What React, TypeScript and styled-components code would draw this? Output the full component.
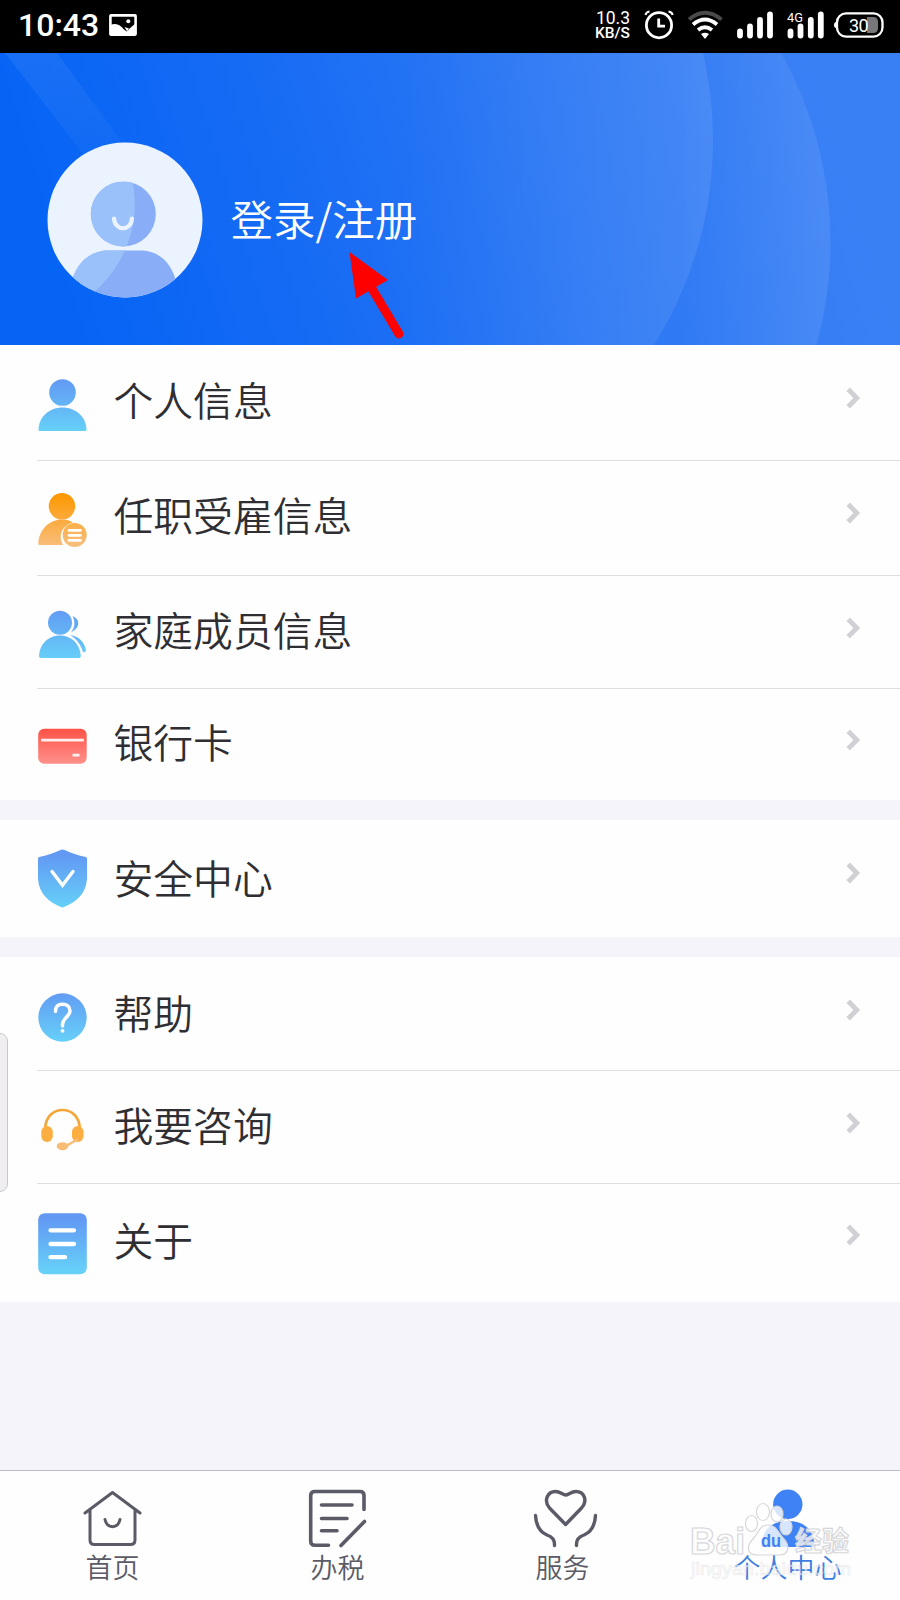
import React from 'react';
import styled, { createGlobalStyle } from 'styled-components';

const GlobalStyle = createGlobalStyle`
  * { box-sizing: border-box; }
  body { margin: 0; background: #f4f4fa; }
`;

const Screen = styled.main`
  position: relative;
  display: flex;
  flex-direction: column;
  width: 900px;
  height: 1600px;
  overflow: hidden;
  background: #f4f4fa;
  font-family: 'Noto Sans CJK SC', sans-serif;
`;

const StatusBar = styled.header`
  display: flex;
  align-items: center;
  height: 53px;
  flex: none;
  padding: 0 4px 3px 18px;
  background: #000;
  color: #fff;
  font-family: Roboto, sans-serif;
`;

const Clock = styled.span`
  width: 91px;
  font-size: 32px;
  font-weight: 500;
  line-height: 50px;
`;

const StatusIcons = styled.div`
  display: flex;
  align-items: center;
  margin-left: auto;
`;

const NetSpeed = styled.div`
  display: flex;
  flex-direction: column;
  align-items: flex-end;
  margin-right: 14px;
  padding-top: 1px;
  font-weight: 500;
  line-height: 15px;
  white-space: nowrap;
`;

const SpeedValue = styled.span`
  font-size: 17.5px;
  font-weight: 400;
`;

const SpeedUnit = styled.span`
  font-size: 15.5px;
`;

const Hero = styled.section`
  position: relative;
  display: flex;
  align-items: center;
  height: 292px;
  flex: none;
  padding: 41px 0 0 47px;
`;

const HeroBackdrop = styled.svg`
  position: absolute;
  inset: 0;
`;

const Avatar = styled.svg`
  position: relative;
  flex: none;
`;

const LoginLink = styled.span`
  position: relative;
  margin-left: 27.5px;
  padding-bottom: 4px;
  color: #fff;
  font-size: 42.5px;
  font-weight: 350;
  line-height: 60px;
  white-space: nowrap;
`;

const Pointer = styled.svg`
  position: absolute;
  left: 340px;
  top: 192px;
`;

const Group = styled.section`
  flex: none;
  margin-bottom: 20px;
  background: #fefefe;
`;

const Row = styled.div<{ $height: number }>`
  display: flex;
  align-items: center;
  height: ${(p) => p.$height}px;
  padding-left: 37px;
`;

const Divider = styled.div`
  height: 1px;
  margin-left: 37px;
  background: #dfdfe2;
`;

const RowIcon = styled.svg`
  flex: none;
`;

const RowLabel = styled.span<{ $lift: number }>`
  flex: 1;
  margin-left: 24.5px;
  padding-bottom: ${(p) => p.$lift * 2}px;
  color: #2f2f33;
  font-size: 39.8px;
  font-weight: 350;
  line-height: 56px;
`;

const Chevron = styled.svg<{ $lift: number }>`
  flex: none;
  margin: 0 39px ${(p) => p.$lift * 2}px 0;
`;

const TabBar = styled.nav`
  display: flex;
  height: 130px;
  margin-top: auto;
  flex: none;
  border-top: 1px solid #bdbdc6;
  background: #fefefe;
`;

const Tab = styled.div<{ $active?: boolean }>`
  display: flex;
  flex: 1;
  flex-direction: column;
  align-items: center;
  padding-top: 13px;
  color: ${(p) => (p.$active ? '#3d7fe0' : '#5a5b66')};
  font-size: 27px;
  font-weight: 350;
  line-height: 34px;
`;

const SideHandle = styled.div`
  position: absolute;
  left: -2px;
  top: 1033px;
  width: 10px;
  height: 159px;
  border: 1px solid #c9c8cb;
  border-radius: 0 8px 8px 0;
  background: #f0eef1;
`;

const Watermark = styled.svg`
  position: absolute;
  left: 680px;
  top: 1495px;
`;

const blue = 'url(#blue)';

/* Row icons share a 52x76 canvas that is centred on the row. */
const PersonIcon = () => (
  <g fill={blue}>
    <circle cx="25.5" cy="27.5" r="13.3" />
    <path d="M1.5 64.5C2 51 13 42.5 25.5 42.5S49 51 49.5 64.5Q49.5 66 48 66H3Q1.5 66 1.5 64.5Z" />
  </g>
);

const EmployIcon = () => (
  <g>
    <g fill="url(#orange)">
      <circle cx="25" cy="26.3" r="13.3" />
      <path d="M1.3 63.5C2 49 13 39.5 25 39.5C30 39.5 33 40.5 36 42.5C24 46 21 56 26 65H3Q1.3 65 1.3 63.5Z" />
      <circle cx="37.7" cy="55" r="12" />
    </g>
    <path d="M32 50.3H43.500M32 55.3H43.500M32 60.3H43.500" stroke="#fff" strokeWidth="2.8" strokeLinecap="round" />
  </g>
);

const FamilyIcon = () => (
  <g fill={blue}>
    <circle cx="23" cy="28.7" r="12" />
    <path d="M35.5 22C43.5 25 43.5 34 34 38.5C38 33 38.5 28 35.5 22Z" />
    <path d="M2 62C2.5 49.5 12 41.5 23 41.5S43 49.5 43.8 62Q43.8 64 42 64H4Q2 64 2 62Z" />
    <path d="M33 41C42 42 48 49 49 56.5Q48 59 46 58C43.5 50 39 44.5 33 41Z" />
  </g>
);

const CardIcon = () => (
  <g>
    <rect x="1.2" y="21.8" width="48.5" height="35" rx="6" fill="url(#red)" />
    <path d="M4 33.2H46.8M35.5 48.2H42.5" stroke="#fff" strokeWidth="2.8" opacity=".9" />
  </g>
);

const ShieldIcon = () => (
  <g>
    <path d="M24 8.8Q25.5 8 27 8.8C34 12 41 14.5 49 16Q50 16.5 50 18V38C49 53 39 61 27 66Q25.5 66.8 24 66C12 61 2 53 1 38V18Q1 16.5 2 16C10 14.5 17 12 24 8.8Z" fill={blue} />
    <path d="M15 30.5L25.5 44.3L36 30.5" fill="none" stroke="#fff" strokeWidth="3.4" strokeLinecap="round" />
  </g>
);

const HelpIcon = () => (
  <g>
    <circle cx="25.5" cy="41.5" r="24.2" fill={blue} />
    <path d="M18.5 35.5C18.5 30.5 21.5 28.3 25.5 28.3C30 28.3 33 31 33 35C33 40.5 25.5 42 25.5 49V50" fill="none" stroke="#fff" strokeWidth="3.5" strokeLinecap="round" />
    <circle cx="25.5" cy="54.8" r="1.9" fill="#fff" />
  </g>
);

const HeadsetIcon = () => (
  <g>
    <path d="M8.3 39C9 15 42 15 42.7 39" fill="none" stroke="#f5a638" strokeWidth="2.7" />
    <rect x="4.3" y="37" width="11.5" height="16" rx="5.7" fill="#fcae41" />
    <rect x="35" y="37" width="11.5" height="16" rx="5.7" fill="#fcae41" />
    <path d="M41 50L30 56.5" stroke="#f8bd75" strokeWidth="2.5" />
    <ellipse cx="25.5" cy="57.2" rx="5.7" ry="4" fill="#f8bd75" />
  </g>
);

const AboutIcon = () => (
  <g>
    <rect x="1.2" y="8.2" width="48.6" height="61" rx="6.5" fill={blue} />
    <path d="M13.5 25.3H37M13.5 39H37M13.5 52.2H28" stroke="#fff" strokeWidth="4.3" strokeLinecap="round" />
  </g>
);

type Item = { label: string; icon: React.ReactNode; height: number; lift?: number; chevronLift?: number };

const groups: Item[][] = [
  [
    { label: '个人信息', icon: <PersonIcon />, height: 115 },
    { label: '任职受雇信息', icon: <EmployIcon />, height: 114, lift: 4.5, chevronLift: 5.5 },
    { label: '家庭成员信息', icon: <FamilyIcon />, height: 112 },
    { label: '银行卡', icon: <CardIcon />, height: 111 },
  ],
  [{ label: '安全中心', icon: <ShieldIcon />, height: 117, lift: 1.5, chevronLift: 5.5 }],
  [
    { label: '帮助', icon: <HelpIcon />, height: 113, lift: 2, chevronLift: 3.5 },
    { label: '我要咨询', icon: <HeadsetIcon />, height: 112 },
    { label: '关于', icon: <AboutIcon />, height: 118, lift: 4, chevronLift: 8 },
  ],
];

const Gradient = ({ id, from, to }: { id: string; from: string; to: string }) => (
  <linearGradient id={id} gradientUnits="userSpaceOnUse" x1="0" y1="14" x2="0" y2="66">
    <stop stopColor={from} />
    <stop offset="1" stopColor={to} />
  </linearGradient>
);

export default function App() {
  return (
    <Screen>
      <GlobalStyle />
      <svg width="0" height="0" style={{ position: 'absolute' }}>
        <defs>
          <Gradient id="blue" from="#6299f3" to="#66d0f8" />
          <Gradient id="orange" from="#fd9800" to="#f8be7c" />
          <linearGradient id="red" x1="0" y1="0" x2="0" y2="1">
            <stop stopColor="#ff5247" />
            <stop offset="1" stopColor="#fd918b" />
          </linearGradient>
        </defs>
      </svg>

      <StatusBar>
        <Clock>10:43</Clock>
        <svg width="28" height="22" viewBox="0 0 28 22">
          <rect x="1.4" y="1.4" width="25.2" height="19.2" rx="0.5" fill="none" stroke="#fff" strokeWidth="2.6" />
          <path d="M1 11C8 8.5 11 11 15 15.5L18.5 18L15.5 13L20 14.5L18.5 16.5L21 18.5L19.5 19V21H1Z" fill="#fff" />
          <path d="M20 15L27 9V21H20L18 18Z" fill="#fff" />
          <circle cx="19.3" cy="7.2" r="2" fill="#fff" />
        </svg>
        <StatusIcons>
          <NetSpeed>
            <SpeedValue>10.3</SpeedValue>
            <SpeedUnit>KB/S</SpeedUnit>
          </NetSpeed>
          <svg width="252" height="34" viewBox="644 8 252 34" fill="none">
            <g stroke="#fff">
              <circle cx="659" cy="25.2" r="12.6" strokeWidth="2.8" />
              <path d="M658.7 18.5V26.2H665" strokeWidth="2.8" />
              <path d="M645.5 15Q646 12 649.5 11.5M668.5 11.5Q672 12 672.7 15" strokeWidth="2" />
            </g>
            <path d="M689 19.5Q705 6 721.5 19.5" stroke="#4a4a4a" strokeWidth="4" />
            <path d="M693 24.5Q705 14.5 717 24.5M698 30Q705 24.5 712 30" stroke="#fff" strokeWidth="3.8" />
            <path d="M701 34Q705 31.5 709 34L705 39Z" fill="#fff" />
            <path d="M740 31.5V35.5M750 26.5V35.5M760 20V35.5M770 14.5V35.5M790.5 31.5V35.5M800.5 26.5V35.5M810.8 20V35.5M820.8 14.5V35.5" stroke="#fff" strokeWidth="5.8" strokeLinecap="round" />
            <text x="787" y="21.5" fill="#fff" fontSize="13.5" fontFamily="Roboto" fontWeight="400" textLength="16" lengthAdjust="spacingAndGlyphs">4G</text>
            <path d="M867 17H873Q878 17 878 22V28Q878 33 873 33H867Z" fill="#77777b" />
            <rect x="837" y="13.4" width="45.5" height="23.2" rx="9" stroke="#fff" strokeWidth="2.3" />
            <path d="M837 21.5Q834 22 834 25T837 28.5Z" fill="#fff" />
            <text x="849" y="31.6" fill="#fff" fontSize="18" fontFamily="Roboto" fontWeight="400" textLength="19.5">30</text>
          </svg>
        </StatusIcons>
      </StatusBar>

      <Hero>
        <HeroBackdrop width="900" height="292" viewBox="0 53 900 292">
          <defs>
            <linearGradient id="sky" gradientUnits="userSpaceOnUse" x1="70" y1="310" x2="820" y2="80">
              <stop stopColor="#0664f5" />
              <stop offset=".3" stopColor="#166bf4" />
              <stop offset=".65" stopColor="#2c78f4" />
              <stop offset="1" stopColor="#3a80f5" />
            </linearGradient>
            <linearGradient id="glowA" gradientUnits="userSpaceOnUse" x1="400" y1="0" x2="713" y2="0">
              <stop stopColor="#fff" stopOpacity="0" />
              <stop offset="1" stopColor="#fff" stopOpacity=".09" />
            </linearGradient>
            <linearGradient id="glowB" gradientUnits="userSpaceOnUse" x1="680" y1="0" x2="830" y2="0">
              <stop stopColor="#fff" stopOpacity="0" />
              <stop offset="1" stopColor="#fff" stopOpacity=".09" />
            </linearGradient>
            <linearGradient id="ray" gradientUnits="userSpaceOnUse" x1="30" y1="53" x2="110" y2="170">
              <stop stopColor="#fff" stopOpacity=".07" />
              <stop offset="1" stopColor="#fff" stopOpacity=".02" />
            </linearGradient>
          </defs>
          <rect y="53" width="900" height="292" fill="url(#sky)" />
          <circle cx="445.5" cy="242" r="385" fill="url(#glowB)" />
          <circle cx="328" cy="140" r="385" fill="url(#glowA)" />
          <path d="M5 53H57L135 160H88Z" fill="url(#ray)" />
        </HeroBackdrop>
        <Avatar width="156" height="156" viewBox="47 141.5 156 156">
          <clipPath id="disc"><circle cx="125" cy="219.5" r="77.5" /></clipPath>
          <clipPath id="figure">
            <circle cx="123.3" cy="213.5" r="32.5" />
            <path d="M71 285C75 262 91 250 108 250H141C158 250 173 262 177 285V310H71Z" />
          </clipPath>
          <circle cx="125" cy="219.5" r="77.5" fill="#eaf3fe" />
          <g clipPath="url(#disc)">
            <g clipPath="url(#figure)">
              <rect x="47" y="141" width="156" height="160" fill="#89aef7" />
              <path d="M47 141H118C144 190 142 246 96 290L80 310H47Z" fill="#9bc1fb" />
            </g>
          </g>
          <path d="M114 218C115 231 131 231 132 218" fill="none" stroke="#eaf3fe" strokeWidth="4.2" strokeLinecap="round" />
        </Avatar>
        <LoginLink>登录/注册</LoginLink>
        <Pointer width="70" height="100" viewBox="340 245 70 100">
          <path d="M349.5 252L388 280L356 298.5Z" fill="#f00" />
          <path d="M371 287L399 334" stroke="#f00" strokeWidth="9" strokeLinecap="round" />
        </Pointer>
      </Hero>

      {groups.map((items, g) => (
        <Group key={g}>
          {items.map((item, i) => (
            <React.Fragment key={item.label}>
              {i > 0 && <Divider />}
              <Row $height={item.height}>
                <RowIcon width="52" height="76" viewBox="0 0 52 76">{item.icon}</RowIcon>
                <RowLabel $lift={item.lift ?? 3.5}>{item.label}</RowLabel>
                <Chevron $lift={item.chevronLift ?? 4.5} width="16" height="24" viewBox="0 0 16 24">
                  <path d="M3.2 3.2L11.8 12L3.2 20.8" fill="none" stroke="#d0d0d5" strokeWidth="4.8" />
                </Chevron>
              </Row>
            </React.Fragment>
          ))}
        </Group>
      ))}

      <TabBar>
        <Tab>
          <svg width="66" height="66" viewBox="80 1484 66 66" fill="none" stroke="#5a5b66" strokeWidth="3" strokeLinecap="round" strokeLinejoin="round">
            <path d="M85 1513L112.5 1492.5L140 1513M90 1510V1540Q90 1544.5 94.5 1544.5H130.5Q135 1544.5 135 1540V1510M105 1519.5C107 1529 118 1529 120 1519.5" />
          </svg>
          首页
        </Tab>
        <Tab>
          <svg width="66" height="66" viewBox="305 1484 66 66" fill="none" stroke="#5a5b66" strokeWidth="3.6" strokeLinecap="round" strokeLinejoin="round">
            <path d="M364 1509.5V1495.5Q364 1491.5 360 1491.5H315Q310.7 1491.5 310.7 1495.5V1541Q310.7 1545.3 315 1545.3H328.5M321.5 1505H352M321.5 1518.5H347M321.5 1530.7H337M341 1545.5L364.5 1521.5" />
          </svg>
          办税
        </Tab>
        <Tab>
          <svg width="72" height="66" viewBox="527 1484 72 66" fill="none" stroke="#5a5b66" strokeWidth="3.4" strokeLinecap="round" strokeLinejoin="round">
            <path d="M565.6 1524.5L549.5 1508C543 1500 548 1491.5 555.5 1491.5C560 1491.5 563 1495 565.6 1495S571 1491.5 576 1491.5C583.5 1491.5 588.5 1500 581.5 1508L565.6 1524.5ZM535.5 1515.5C536 1525 540 1532 547 1535Q555 1537.500 554.5 1545.5M595.5 1515.5C595 1525 591 1532 584 1535Q576 1537.5 576.5 1545.5" />
          </svg>
          服务
        </Tab>
        <Tab $active>
          <svg width="66" height="66" viewBox="754.5 1484 66 66" fill="#3f82f5">
            <circle cx="787.3" cy="1504.3" r="14.7" />
            <path d="M761 1547C761 1530 771 1521 787.5 1521S814 1530 814 1547Z" />
          </svg>
          个人中心
        </Tab>
      </TabBar>

      <SideHandle />

      <Watermark width="190" height="95" viewBox="680 1495 190 95">
        <g fill="#fff" fillOpacity=".8" stroke="#d6d6da" strokeWidth="1.2">
          <ellipse cx="751.5" cy="1523.5" rx="6" ry="8" />
          <ellipse cx="763" cy="1512" rx="6.5" ry="8.5" />
          <ellipse cx="777" cy="1514" rx="6" ry="8" />
          <ellipse cx="786" cy="1527" rx="6" ry="8" />
          <path d="M768 1525C777 1525 778 1533 784 1539C791 1547 788 1555 779 1555H757C747 1555 746 1546 753 1539C759 1533 759 1525 768 1525Z" />
          <text x="690" y="1554" fontFamily="Liberation Sans" fontWeight="700" fontSize="37" textLength="55" lengthAdjust="spacingAndGlyphs">Bai</text>
          <text x="795" y="1551" fontFamily="Noto Sans CJK SC" fontWeight="700" fontSize="27">经验</text>
        </g>
        <text x="691" y="1575" fill="#fff" fillOpacity=".5" stroke="#dcdce0" strokeOpacity=".6" strokeWidth=".7" fontFamily="Liberation Sans" fontSize="19" textLength="160" lengthAdjust="spacingAndGlyphs">jingyan.baidu.com</text>
        <text x="761" y="1547" fill="#3f82f5" fontFamily="Liberation Sans" fontWeight="700" fontSize="19" textLength="20" lengthAdjust="spacingAndGlyphs">du</text>
      </Watermark>
    </Screen>
  );
}
